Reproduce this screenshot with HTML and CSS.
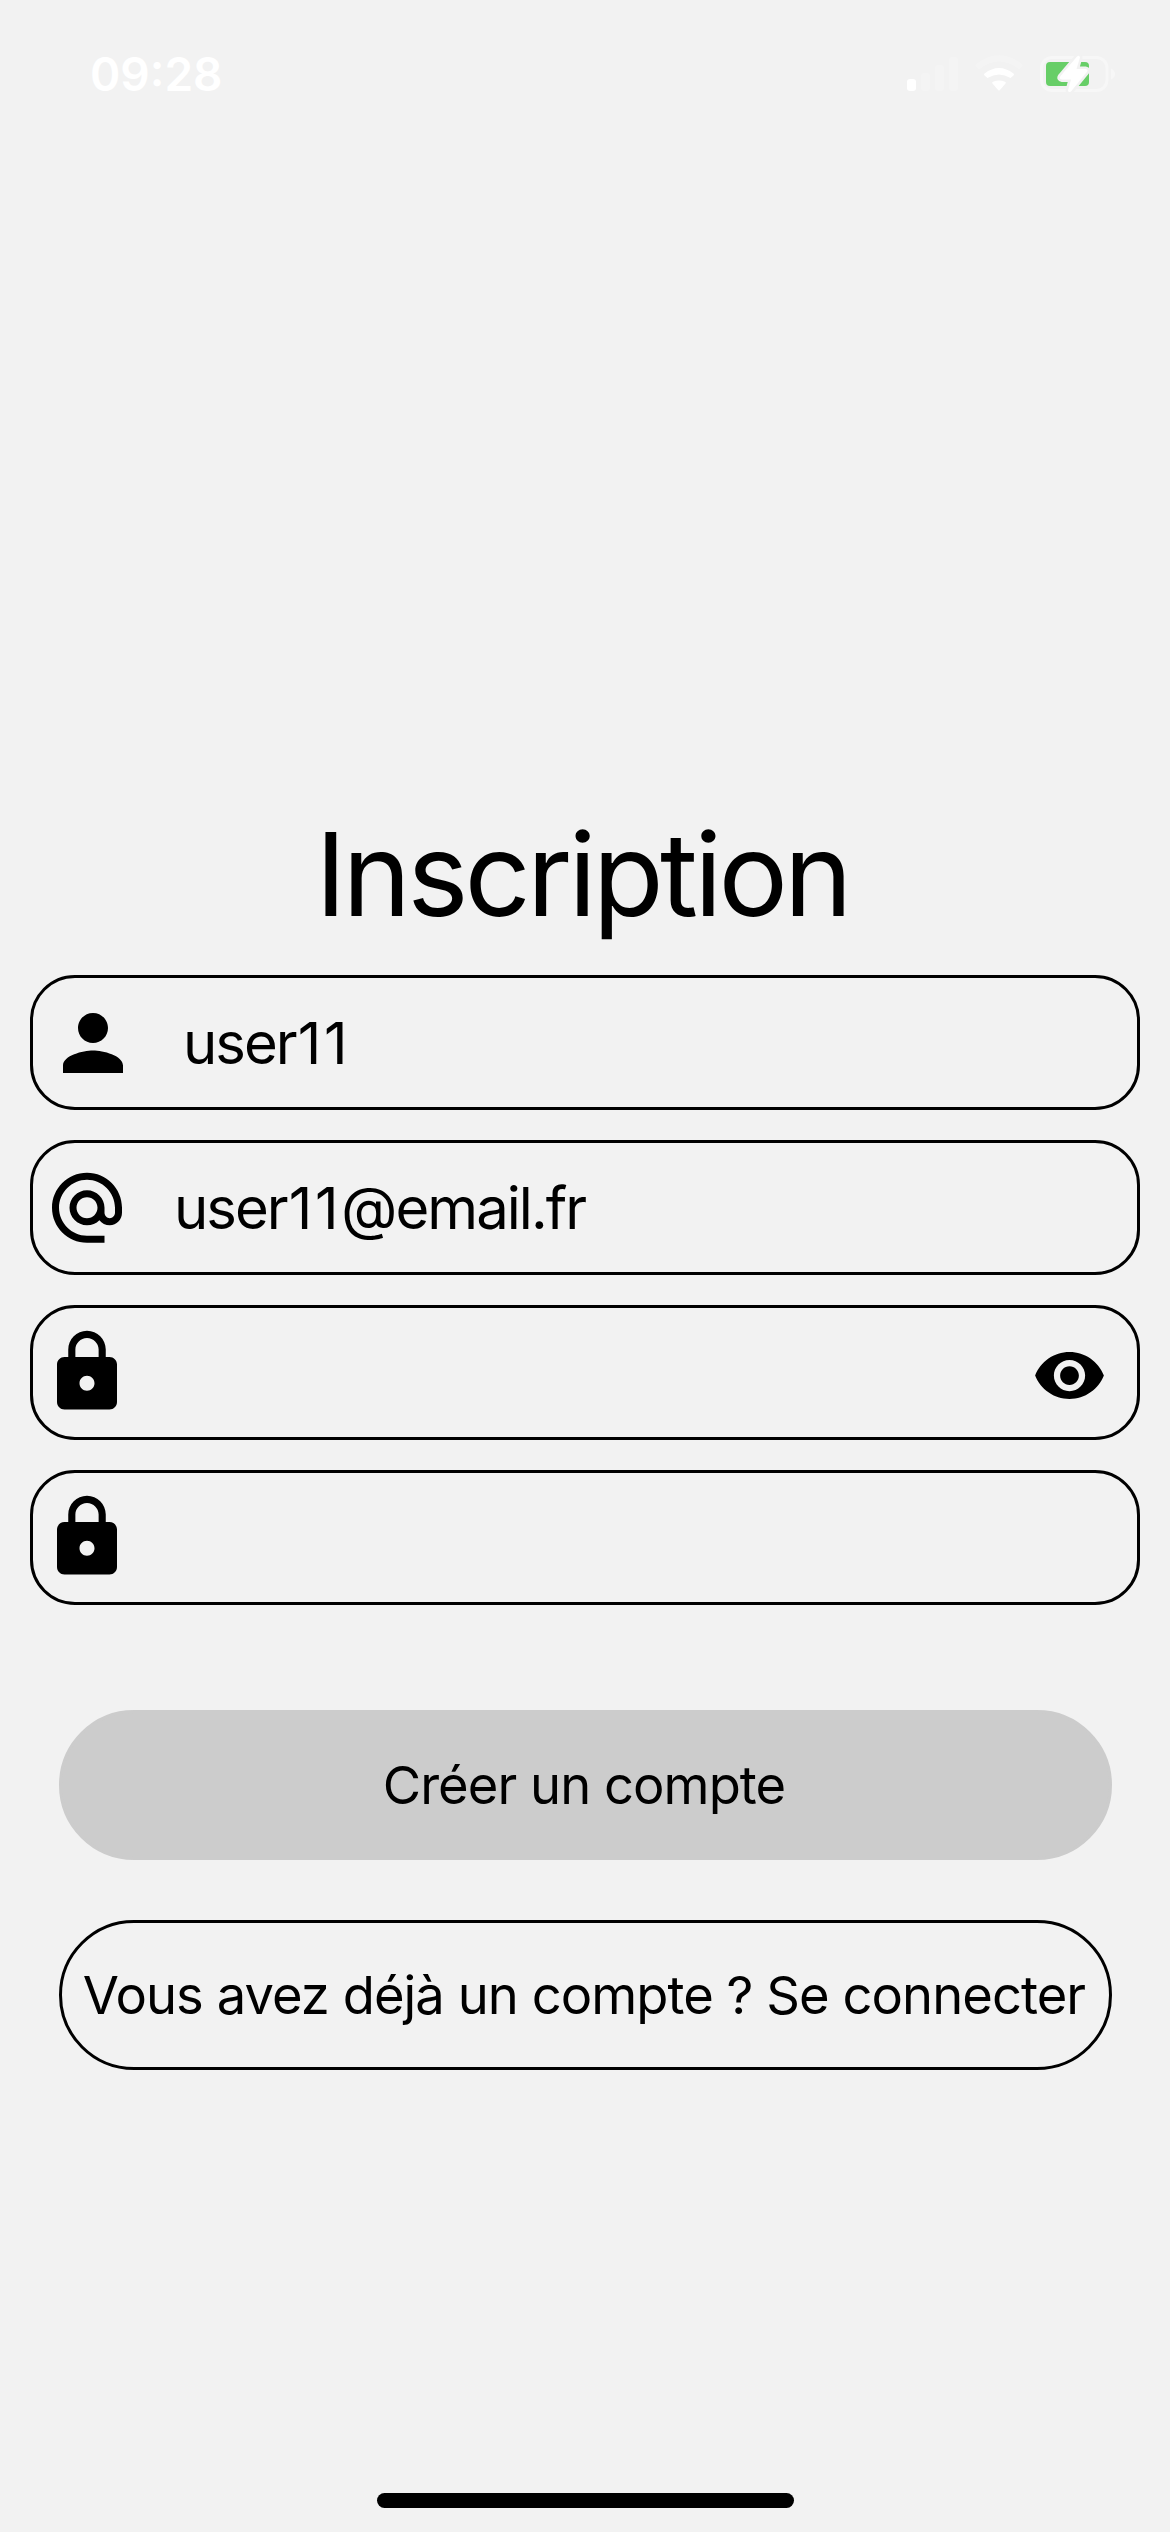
FILE: index.html
```html
<!DOCTYPE html>
<html lang="fr">
<head>
<meta charset="utf-8">
<title>Inscription</title>
<link rel="stylesheet" href="styles.css">
</head>
<body>
<div class="screen">
  <header class="status-bar">
    <span class="time">09:28</span>
    <svg class="status-icons" width="210" height="40" viewBox="906 54 210 40" fill="#fff">
      <rect x="907" y="79" width="9" height="12" rx="3"/>
      <g opacity=".2">
        <rect x="921" y="73" width="9" height="18" rx="3"/>
        <rect x="935" y="65" width="9" height="26" rx="3"/>
        <rect x="949" y="57" width="9" height="34" rx="3"/>
        <path d="M976 64Q999 46.500 1022 64Q1023 65.500 1022 66.500L1019 69.500Q999 53.500 979 69.500L976 66.500Q975 65.500 976 64Z"/>
      </g>
      <path d="M1111 68.500Q1115 70.500 1115 74T1111 79.500Z" opacity=".4"/>
      <path d="M984.500 73.500Q999 62.500 1013.500 73.500Q1014.500 74.500 1013.500 75.500L1010.500 78Q999 71 987.500 78L984.500 75.500Q983.500 74.500 984.500 73.500Z"/>
      <path d="M992.500 83.500Q991.500 82.500 993 81.800Q999 79 1005 81.800Q1006.500 82.500 1005.500 83.500L999.500 90.500H998.500Z"/>
      <rect x="1041.500" y="57.500" width="65.500" height="33" rx="10.500" fill="none" stroke="#fff" stroke-width="3" opacity=".4"/>
      <rect x="1046" y="62" width="43" height="24" rx="4" fill="#67ce67"/>
      <path class="bolt" d="M1077 56.500Q1079.500 54.500 1080 57.500L1076.500 69H1085.500Q1089 69.500 1086.500 72.500L1071 91.500Q1068.500 93 1068 90.500L1071 79.500H1062Q1058.500 79 1060.500 76Z"/>
    </svg>
  </header>

  <main class="form">
    <h1 class="title">Inscription</h1>
    <div class="field field-user">
      <svg class="icon icon-user" viewBox="0 0 24 24"><path d="M12 12c2.210 0 4-1.790 4-4s-1.790-4-4-4-4 1.790-4 4 1.790 4 4 4zm0 2c-2.670 0-8 1.340-8 4v2h16v-2c0-2.660-5.330-4-8-4z"/></svg>
      <span class="value">user<span class="digits">11</span></span>
    </div>
    <div class="field field-email">
      <svg class="icon icon-email" viewBox="0 0 24 24"><path d="M12 1.950c-5.520 0-10 4.480-10 10s4.480 10 10 10h5v-2h-5c-4.340 0-8-3.660-8-8s3.660-8 8-8 8 3.660 8 8v1.430c0 .79-.71 1.570-1.500 1.570s-1.500-.78-1.500-1.570v-1.430c0-2.760-2.240-5-5-5s-5 2.240-5 5 2.240 5 5 5c1.380 0 2.640-.56 3.540-1.470.65.89 1.770 1.470 2.960 1.470 1.970 0 3.500-1.600 3.500-3.570v-1.430c0-5.520-4.480-10-10-10zm0 13c-1.660 0-3-1.340-3-3s1.340-3 3-3 3 1.340 3 3-1.340 3-3 3z"/></svg>
      <span class="value">user<span class="digits">11</span>@email.fr</span>
    </div>
    <div class="field">
      <svg class="icon icon-lock" viewBox="0 0 24 24"><path d="M18 8h-1V6c0-2.760-2.240-5-5-5S7 3.240 7 6v2H6c-1.100 0-2 .9-2 2v10c0 1.100.9 2 2 2h12c1.100 0 2-.9 2-2V10c0-1.100-.9-2-2-2zm-6 9c-1.100 0-2-.9-2-2s.9-2 2-2 2 .9 2 2-.9 2-2 2zm3.100-9H8.900V6c0-1.710 1.390-3.100 3.100-3.100 1.710 0 3.100 1.390 3.100 3.100v2z"/></svg>
      <span class="value"></span>
      <svg class="icon-eye" viewBox="0 0 24 24"><path d="M12 4.500C7 4.500 2.730 7.610 1 12c1.730 4.390 6 7.500 11 7.500s9.270-3.110 11-7.500c-1.730-4.390-6-7.500-11-7.500zM12 17c-2.760 0-5-2.240-5-5s2.240-5 5-5 5 2.240 5 5-2.240 5-5 5zm0-8c-1.660 0-3 1.340-3 3s1.340 3 3 3 3-1.340 3-3-1.340-3-3-3z"/></svg>
    </div>
    <div class="field">
      <svg class="icon icon-lock" viewBox="0 0 24 24"><path d="M18 8h-1V6c0-2.760-2.240-5-5-5S7 3.240 7 6v2H6c-1.100 0-2 .9-2 2v10c0 1.100.9 2 2 2h12c1.100 0 2-.9 2-2V10c0-1.100-.9-2-2-2zm-6 9c-1.100 0-2-.9-2-2s.9-2 2-2 2 .9 2 2-.9 2-2 2zm3.100-9H8.900V6c0-1.710 1.390-3.100 3.100-3.100 1.710 0 3.100 1.390 3.100 3.100v2z"/></svg>
      <span class="value"></span>
    </div>
    <div class="actions">
      <button class="button button-primary">Créer un compte</button>
      <button class="button button-outline">Vous avez déjà un compte ? Se connecter</button>
    </div>
  </main>

  <div class="home-indicator"></div>
</div>
</body>
</html>
```
FILE: styles.css
```css
* { box-sizing: border-box; }

body {
  margin: 0;
  background: #f2f2f2;
  color: #000;
  font-family: Inter, "Liberation Sans", sans-serif;
}

.screen {
  display: flex;
  flex-direction: column;
  width: 1170px;
  height: 2532px;
  padding-bottom: 24px;
}

.status-bar {
  display: flex;
  align-items: center;
  justify-content: space-between;
  height: 148px;
  padding: 0 54px 0 90px;
}

.time {
  color: #fff;
  font-size: 46px;
  font-weight: 600;
  line-height: 56px;
}

.form {
  display: flex;
  flex-direction: column;
  gap: 30px;
  padding: 656px 30px 0;
}

.title {
  margin: 0;
  height: 141px;
  padding-right: 6px;
  font-size: 116px;
  font-weight: 400;
  line-height: 141px;
  letter-spacing: -3.85px;
  text-align: center;
}

.field {
  display: flex;
  align-items: center;
  height: 135px;
  padding: 0 30px 0 9px;
  border: 3px solid #000;
  border-radius: 45px;
}

.field-user { padding-left: 15px; }
.field-email { padding-left: 12px; }

.icon {
  flex: none;
  width: 90px;
  height: 90px;
}

.icon-email {
  width: 84px;
  height: 84px;
}

.icon-lock { margin-bottom: 1px; }

.icon-eye {
  flex: none;
  width: 75px;
  height: 75px;
  margin-top: 6px;
}

.value {
  flex: 1;
  margin-left: 45px;
  padding-top: 2px;
  font-size: 58px;
  line-height: 71px;
  letter-spacing: -1.95px;
}

/* The narrow "1" glyphs get a little more room than the letters. */
.digits {
  margin-left: 2px;
  letter-spacing: 2.7px;
}

.actions {
  display: flex;
  flex-direction: column;
  gap: 60px;
  padding: 75px 28px 0 29px;
}

.button {
  height: 150px;
  padding: 0 3px 0 0;
  border: 3px solid #000;
  border-radius: 75px;
  background: none;
  color: #000;
  font: 400 52.5px/64px Inter, "Liberation Sans", sans-serif;
  letter-spacing: -0.95px;
  white-space: nowrap;
}

.button-primary {
  border-color: #ccc;
  background: #ccc;
}

.bolt {
  stroke: #f2f2f2;
  stroke-width: 5px;
  stroke-linejoin: round;
  paint-order: stroke;
}

.home-indicator {
  width: 417px;
  height: 15px;
  margin: auto auto 0;
  border-radius: 8px;
  background: #000;
}
```
